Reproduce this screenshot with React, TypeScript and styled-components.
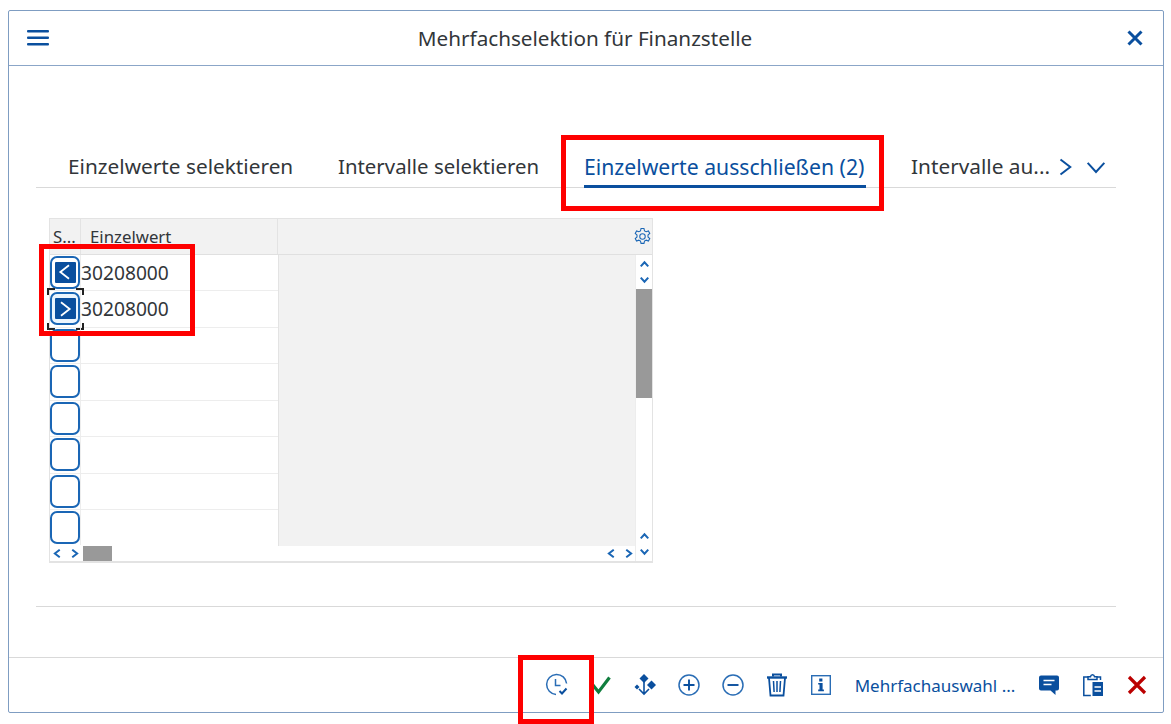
import React from "react"
import styled, { createGlobalStyle } from "styled-components"

const blue = "#0a4f9e"

const GlobalStyle = createGlobalStyle`
  html, body {
    margin: 0;
    background: #fff;
    font-family: "Noto Sans", "Open Sans", sans-serif;
    color: #32363a;
  }
`

const Page = styled.div`
  position: relative;
  width: 1171px;
  height: 724px;
  padding: 10px 7px 11px 8px;
  box-sizing: border-box;
  overflow: hidden;
`

const Dialog = styled.div`
  height: 100%;
  box-sizing: border-box;
  border: 1px solid #7f9dc2;
  border-radius: 2px;
  display: flex;
  flex-direction: column;
`

const Header = styled.header`
  height: 55px;
  flex: none;
  box-sizing: border-box;
  border-bottom: 1px solid #8ba6c8;
  display: flex;
  align-items: center;
  padding: 0 20px 0 18px;
`

const HeaderSlot = styled.div<{ $end?: boolean }>`
  width: 30px;
  flex: none;
  display: flex;
  justify-content: ${p => (p.$end ? "flex-end" : "flex-start")};
`

const Title = styled.h1`
  flex: 1;
  margin: 0;
  text-align: center;
  font-size: 20.7px;
  font-weight: 400;
  line-height: 55px;
`

const Content = styled.main`
  flex: 1;
  padding: 74px 47px 0 27px;
  display: flex;
  flex-direction: column;
`

const TabStrip = styled.div`
  height: 48px;
  box-sizing: border-box;
  border-bottom: 1px solid #d9d9d9;
  display: flex;
  padding-left: 32px;
`

const Tab = styled.div<{ $active?: boolean; $width: number; $size: number }>`
  width: ${p => p.$width}px;
  flex: none;
  box-sizing: border-box;
  font-size: ${p => p.$size}px;
  line-height: 53px;
  white-space: nowrap;
  color: ${p => (p.$active ? blue : "#32363a")};
  position: relative;
  &::after {
    content: "";
    display: ${p => (p.$active ? "block" : "none")};
    position: absolute;
    left: 0;
    width: 282px;
    bottom: -1px;
    height: 3px;
    background: ${blue};
  }
`

const TabIcons = styled.div`
  display: flex;
  align-items: center;
  gap: 12px;
  height: 53px;
`

const Table = styled.div`
  margin: 30px 0 0 13px;
  width: 604px;
  height: 344.5px;
  box-sizing: border-box;
  border: 1px solid #e3e3e3;
  border-bottom-width: 2px;
  display: flex;
  flex-direction: column;
`

const HeadRow = styled.div`
  height: 35.5px;
  flex: none;
  box-sizing: border-box;
  background: #f2f2f2;
  border-bottom: 1px solid #e0e0e0;
  display: flex;
  font-size: 16.8px;
  line-height: 37px;
`

const HeadCell = styled.div<{ $width?: number; $pad: number }>`
  width: ${p => (p.$width ? `${p.$width}px` : "auto")};
  flex: ${p => (p.$width ? "none" : "1")};
  box-sizing: border-box;
  padding-left: ${p => p.$pad}px;
  border-right: 1px solid #e3e3e3;
  display: flex;
  justify-content: space-between;
  align-items: center;
  &:last-child {
    border-right: none;
    padding-right: 0;
  }
`

const TableBody = styled.div`
  height: 291px;
  flex: none;
  display: flex;
`

const RowsColumn = styled.div`
  width: 228px;
  flex: none;
`

const Row = styled.div`
  height: 36.5px;
  box-sizing: border-box;
  border-bottom: 1px solid #ededed;
  display: flex;
  position: relative;
  &:last-child {
    height: 35px;
    border-bottom: none;
  }
`

const SelectCell = styled.div`
  width: 31px;
  flex: none;
  box-sizing: border-box;
  border-right: 1px solid #ededed;
  padding: 1px 0 0 0;
`

const SelectButton = styled.div<{ $focused?: boolean }>`
  width: 30px;
  height: 33px;
  box-sizing: border-box;
  border: 2px solid #1a66b5;
  border-radius: 7px;
  background: ${p => (p.$focused ? "#ebf5fe" : "#fff")};
  display: flex;
  align-items: center;
  justify-content: center;
`

const SignBox = styled.div`
  width: 21px;
  height: 21px;
  background: ${blue};
  border-radius: 1px;
  display: flex;
  align-items: center;
  justify-content: center;
`

const FocusCorner = styled.span<{ $x: "left" | "right"; $y: "top" | "bottom" }>`
  position: absolute;
  ${p => p.$x}: 0;
  ${p => p.$y}: 0;
  width: 6px;
  height: 5px;
  border-style: solid;
  border-color: #222;
  border-width: ${p => (p.$y === "top" ? "2px" : "0")} ${p => (p.$x === "right" ? "2px" : "0")} ${p => (p.$y === "bottom" ? "2px" : "0")} ${p => (p.$x === "left" ? "2px" : "0")};
`

const FocusFrame = styled.div`
  position: absolute;
  left: -3px;
  top: -3px;
  width: 37px;
  height: 42px;
  pointer-events: none;
`

const ValueCell = styled.div`
  flex: 1;
  font-size: 19.2px;
  line-height: 36px;
`

const GrayArea = styled.div`
  flex: 1;
  background: #f2f2f2;
  border-left: 1px solid #e3e3e3;
`

const VScroll = styled.div`
  width: 16px;
  flex: none;
  height: 306px;
  background: #fff;
  border-left: 1px solid #ededed;
  display: flex;
  flex-direction: column;
  align-items: center;
  position: relative;
  z-index: 1;
`

const ScrollArrows = styled.div<{ $bottom?: boolean }>`
  height: 34px;
  flex: none;
  display: flex;
  flex-direction: column;
  align-items: center;
  justify-content: center;
  gap: 6px;
  margin-top: ${p => (p.$bottom ? "auto" : "0")};
`

const VThumb = styled.div`
  width: 16px;
  height: 109px;
  background: #999;
`

const HScrollRow = styled.div`
  height: 15px;
  flex: none;
  width: 586px;
  display: flex;
  align-items: center;
`

const HArrows = styled.div<{ $width: number }>`
  width: ${p => p.$width}px;
  flex: none;
  display: flex;
  justify-content: center;
  gap: 8px;
`

const HThumb = styled.div`
  width: 29px;
  height: 15px;
  margin-left: 2px;
  background: #999;
`

const HSpacer = styled.div`
  flex: 1;
`

const Separator = styled.div`
  margin-top: 43.5px;
  height: 1px;
  background: #d9d9d9;
`

const Footer = styled.footer`
  height: 55px;
  flex: none;
  box-sizing: border-box;
  border-top: 1px solid #d9d9d9;
  display: flex;
  justify-content: flex-end;
  align-items: center;
  padding: 0 4px 0 0;
`

const IconButton = styled.div`
  width: 44px;
  height: 44px;
  flex: none;
  display: flex;
  align-items: center;
  justify-content: center;
`

const TextButton = styled.div`
  width: 184px;
  flex: none;
  text-align: center;
  font-size: 17px;
  color: ${blue};
  white-space: nowrap;
`

const Marker = styled.div<{ $l: number; $t: number; $w: number; $h: number }>`
  position: absolute;
  left: ${p => p.$l}px;
  top: ${p => p.$t}px;
  width: ${p => p.$w}px;
  height: ${p => p.$h}px;
  box-sizing: border-box;
  border: 5px solid #fe0000;
  pointer-events: none;
`

const Chevron = ({ dir, size = 9, color = "#1a66b5", sw = 2 }: { dir: "l" | "r" | "u" | "d"; size?: number; color?: string; sw?: number }) => {
  const d = { l: "M9 1 2.5 6 9 11", r: "M3 1l6.5 5L3 11", u: "M1 8.5 6 3l5 5.5", d: "M1 3.5 6 9l5-5.5" }[dir]
  return <svg width={size} height={size} viewBox="0 0 12 12" fill="none" stroke={color} strokeWidth={sw * 12 / size}><path d={d} /></svg>
}

const Gear = () => (
  <svg width="19" height="19" viewBox="0 0 18 18" fill="none" stroke="#1a66b5" strokeWidth="1">
    <circle cx="9" cy="9" r="2.6" />
    <path d="M7.6 1.5h2.8l.5 2.2 1.6.8 2.1-.8 1.3 2.4-1.7 1.5v1.8l1.7 1.5-1.3 2.4-2.1-.8-1.6.8-.5 2.2H7.6l-.5-2.2-1.6-.8-2.1.8-1.3-2.4 1.7-1.5V7.6L2.1 6.1l1.3-2.4 2.1.8 1.6-.8z" />
  </svg>
)

const ClockCheck = () => (
  <svg width="24" height="24" viewBox="0 0 24 24" fill="none" stroke="#2a6db5" strokeWidth="1.5">
    <path d="M21.6 10.5A10 10 0 1 0 11 21.4" />
    <path d="M10.5 6v6.5h5" />
    <path d="M14.5 18l2.5 2.5 4.5-5" strokeWidth="2" stroke={blue} />
  </svg>
)

const Check = () => (
  <svg width="20" height="20" viewBox="0 0 20 20" fill="none" stroke="#107e3e" strokeWidth="3.2"><path d="M1.5 9.5l6 7.5L18.5 2.5" /></svg>
)

const Diamonds = () => (
  <svg width="22" height="22" viewBox="0 0 22 22" fill={blue}>
    <path d="M10 0l4.5 4.5L10 9 5.5 4.5z" />
    <path d="M17.5 6.5l4.5 4.5-4.5 4.5L13 11z" />
    <path d="M3 10.5l2.5 2.5L3 15.5.5 13z" />
    <path d="M10 8v12M5 15l5 5 5-5" fill="none" stroke={blue} strokeWidth="1.6" />
  </svg>
)

const CirclePlus = () => (
  <svg width="22" height="22" viewBox="0 0 22 22" fill="none" stroke="#2a6db5" strokeWidth="1.5">
    <circle cx="11" cy="11" r="10" /><path d="M5.5 11h11M11 5.5v11" strokeWidth="1.9" stroke={blue} />
  </svg>
)

const CircleMinus = () => (
  <svg width="22" height="22" viewBox="0 0 22 22" fill="none" stroke="#2a6db5" strokeWidth="1.5">
    <circle cx="11" cy="11" r="10" /><path d="M5.5 11h11" strokeWidth="1.9" stroke={blue} />
  </svg>
)

const Trash = () => (
  <svg width="22" height="24" viewBox="0 0 22 24" fill="none" stroke={blue} strokeWidth="1.5">
    <path d="M1 4.5h20" strokeWidth="2.4" /><path d="M7 3.5V1.5h8v2" strokeWidth="2" />
    <path d="M3 5l1.5 17.5h13L19 5" strokeWidth="1.8" />
    <path d="M7.5 8l.6 11M11 8v11M14.5 8l-.6 11" />
  </svg>
)

const InfoBox = () => (
  <svg width="22" height="22" viewBox="0 0 22 22" fill="none">
    <rect x="1.7" y="1.7" width="18.6" height="18.6" stroke="#2a6db5" strokeWidth="1.4" />
    <path d="M9.2 4.6h3.2v3h-3.2zM8.2 9h4.4v6.6h1.3v1.6H8.2v-1.6h1.3v-5H8.2z" fill={blue} />
  </svg>
)

const Message = () => (
  <svg width="22" height="22" viewBox="0 0 22 22">
    <path d="M3 1.5h16a2 2 0 0 1 2 2v11a2 2 0 0 1-2 2h-1.5V21l-5-4.5H3a2 2 0 0 1-2-2v-11a2 2 0 0 1 2-2z" fill={blue} />
    <path d="M5.5 6.5h11M5.5 10.5h8" stroke="#fff" strokeWidth="1.5" />
  </svg>
)

const Clipboard = () => (
  <svg width="22" height="24" viewBox="0 0 22 24" fill="none" stroke={blue} strokeWidth="1.5">
    <path d="M6 4H1.8v18.5h7" /><path d="M15 4h3.5v3" />
    <path d="M6 6.5V3.7h2.5C9 1 12 1 12.5 3.7H15v2.8z" />
    <rect x="10.5" y="9" width="10.5" height="14" fill={blue} stroke="none" />
    <path d="M12.5 14h6.5M12.5 18h6.5" stroke="#fff" strokeWidth="1.3" />
  </svg>
)

const RedCross = () => (
  <svg width="20" height="20" viewBox="0 0 20 20" fill="none" stroke="#bb0000" strokeWidth="3.2"><path d="M2 2l16 16M18 2 2 18" /></svg>
)

const rows = [
  { sign: "l" as const, value: "30208000" },
  { sign: "r" as const, value: "30208000", focused: true },
  {}, {}, {}, {}, {}, {},
] as { sign?: "l" | "r"; value?: string; focused?: boolean }[]

export default function App() {
  return <Page>
    <GlobalStyle />
    <Dialog>
      <Header>
        <HeaderSlot>
          <svg width="22" height="16" viewBox="0 0 22 16" fill={blue}><rect y="0" width="22" height="2.6" rx="1" /><rect y="6.5" width="22" height="2.6" rx="1" /><rect y="13" width="22" height="2.6" rx="1" /></svg>
        </HeaderSlot>
        <Title>Mehrfachselektion für Finanzstelle</Title>
        <HeaderSlot $end>
          <svg width="16" height="16" viewBox="0 0 16 16" fill="none" stroke={blue} strokeWidth="3"><path d="M1.5 1.5l13 13M14.5 1.5l-13 13" /></svg>
        </HeaderSlot>
      </Header>
      <Content>
        <TabStrip>
          <Tab $width={270} $size={20.8}>Einzelwerte selektieren</Tab>
          <Tab $width={246} $size={20.4}>Intervalle selektieren</Tab>
          <Tab $width={327} $size={21.2} $active>Einzelwerte ausschließen (2)</Tab>
          <Tab $width={145} $size={20.8}>Intervalle au...</Tab>
          <TabIcons>
            <Chevron dir="r" size={18} color={blue} sw={2} />
            <Chevron dir="d" size={20} color={blue} sw={2} />
          </TabIcons>
        </TabStrip>
        <Table>
          <HeadRow>
            <HeadCell $width={31} $pad={3}>S...</HeadCell>
            <HeadCell $width={197} $pad={9}>Einzelwert</HeadCell>
            <HeadCell $pad={0}><span /><Gear /></HeadCell>
          </HeadRow>
          <TableBody>
            <RowsColumn>
              {rows.map((r, i) => <Row key={i}>
                <SelectCell>
                  <SelectButton $focused={r.focused}>
                    {r.sign && <SignBox><Chevron dir={r.sign} size={16} color="#fff" sw={1.8} /></SignBox>}
                  </SelectButton>
                </SelectCell>
                <ValueCell>{r.value}</ValueCell>
                {r.focused && <FocusFrame>
                  <FocusCorner $x="left" $y="top" />
                  <FocusCorner $x="right" $y="top" />
                  <FocusCorner $x="left" $y="bottom" />
                  <FocusCorner $x="right" $y="bottom" />
                </FocusFrame>}
              </Row>)}
            </RowsColumn>
            <GrayArea />
            <VScroll>
              <ScrollArrows>
                <Chevron dir="u" />
                <Chevron dir="d" />
              </ScrollArrows>
              <VThumb />
              <ScrollArrows $bottom>
                <Chevron dir="u" />
                <Chevron dir="d" />
              </ScrollArrows>
            </VScroll>
          </TableBody>
          <HScrollRow>
            <HArrows $width={31}><Chevron dir="l" /><Chevron dir="r" /></HArrows>
            <HThumb />
            <HSpacer />
            <HArrows $width={32}><Chevron dir="l" /><Chevron dir="r" /></HArrows>
          </HScrollRow>
        </Table>
        <Separator />
      </Content>
      <Footer>
        <IconButton><ClockCheck /></IconButton>
        <IconButton><Check /></IconButton>
        <IconButton><Diamonds /></IconButton>
        <IconButton><CirclePlus /></IconButton>
        <IconButton><CircleMinus /></IconButton>
        <IconButton><Trash /></IconButton>
        <IconButton><InfoBox /></IconButton>
        <TextButton>Mehrfachauswahl ...</TextButton>
        <IconButton><Message /></IconButton>
        <IconButton><Clipboard /></IconButton>
        <IconButton><RedCross /></IconButton>
      </Footer>
    </Dialog>
    <Marker $l={561} $t={135} $w={323} $h={76} />
    <Marker $l={39} $t={244} $w={156} $h={92} />
    <Marker $l={518} $t={655} $w={76} $h={69} />
  </Page>
}
